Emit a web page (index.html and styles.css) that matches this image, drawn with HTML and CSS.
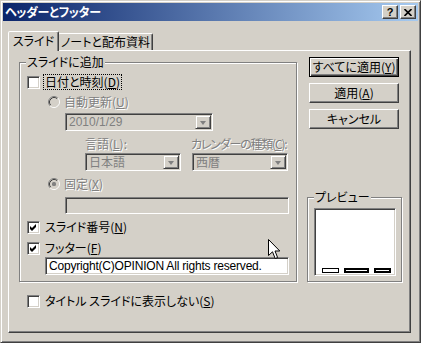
FILE: index.html
```html
<!DOCTYPE html>
<html lang="ja">
<head>
<meta charset="utf-8">
<title>ヘッダーとフッター</title>
<link rel="stylesheet" href="styles.css">
</head>
<body>
<div class="window">
  <div class="titlebar">
    <span class="title">ヘッダーとフッター</span>
    <div class="caption-buttons">
      <span class="cap-btn help">?</span>
      <span class="cap-btn close"><svg width="8" height="7" viewBox="0 0 8 7"><path d="M0.5 0 L7.5 7 M7.5 0 L0.5 7" stroke="#000" stroke-width="1.6" fill="none"/></svg></span>
    </div>
  </div>
  <div class="client">
    <div class="tabs">
      <div class="tab active">スライド</div>
      <div class="tab">ノートと配布資料</div>
    </div>
    <div class="panel">
      <div class="panel-top">
        <div class="group main-group">
          <span class="group-title">スライドに追加</span>
          <div class="row row-date">
            <span class="cb"></span>
            <span class="focus">日付と時刻(<u>D</u>)</span>
          </div>
          <div class="row row-auto">
            <svg class="radio" width="12" height="12" viewBox="0 0 12 12"><circle cx="6" cy="6" r="5" fill="#D4D0C8"/><path d="M2.11 9.89 A5.5 5.5 0 0 1 9.89 2.11" stroke="#808080" fill="none"/><path d="M9.89 2.11 A5.5 5.5 0 0 1 2.11 9.89" stroke="#fff" fill="none"/><path d="M2.82 9.18 A4.5 4.5 0 0 1 9.18 2.82" stroke="#404040" fill="none"/><path d="M9.18 2.82 A4.5 4.5 0 0 1 2.82 9.18" stroke="#D4D0C8" fill="none"/></svg>
            <span class="disabled">自動更新(<u>U</u>)</span>
          </div>
          <div class="combo combo-date">
            <span class="combo-text">2010/1/29</span>
            <span class="drop"><span class="arrow"></span></span>
          </div>
          <div class="row row-labels">
            <span class="disabled lbl-lang">言語(<u>L</u>):</span>
            <span class="disabled lbl-cal">カレンダーの種類(<u>C</u>):</span>
          </div>
          <div class="row row-combos">
            <div class="combo combo-small">
              <span class="combo-text">日本語</span>
              <span class="drop"><span class="arrow"></span></span>
            </div>
            <div class="combo combo-small">
              <span class="combo-text">西暦</span>
              <span class="drop"><span class="arrow"></span></span>
            </div>
          </div>
          <div class="row row-fixed">
            <svg class="radio" width="12" height="12" viewBox="0 0 12 12"><circle cx="6" cy="6" r="5" fill="#D4D0C8"/><path d="M2.11 9.89 A5.5 5.5 0 0 1 9.89 2.11" stroke="#808080" fill="none"/><path d="M9.89 2.11 A5.5 5.5 0 0 1 2.11 9.89" stroke="#fff" fill="none"/><path d="M2.82 9.18 A4.5 4.5 0 0 1 9.18 2.82" stroke="#404040" fill="none"/><path d="M9.18 2.82 A4.5 4.5 0 0 1 2.82 9.18" stroke="#D4D0C8" fill="none"/><rect x="4" y="4" width="4" height="4" rx="1.5" fill="#808080"/></svg>
            <span class="disabled">固定(<u>X</u>)</span>
          </div>
          <div class="field field-fixed"></div>
          <div class="row row-num">
            <span class="cb checked"><svg width="7" height="7" viewBox="0 0 7 7"><path d="M0 2 L2 4 L6 0 L6 3 L2 7 L0 5 Z" fill="#000"/></svg></span>
            <span>スライド番号(<u>N</u>)</span>
          </div>
          <div class="row row-footer">
            <span class="cb checked"><svg width="7" height="7" viewBox="0 0 7 7"><path d="M0 2 L2 4 L6 0 L6 3 L2 7 L0 5 Z" fill="#000"/></svg></span>
            <span>フッター(<u>F</u>)</span>
          </div>
          <div class="field field-copy">Copyright(C)OPINION All rights reserved.</div>
        </div>
        <div class="side">
          <div class="btn default">すべてに適用(<u>Y</u>)</div>
          <div class="btn">適用(<u>A</u>)</div>
          <div class="btn">キャンセル</div>
          <div class="group preview-group">
            <span class="group-title">プレビュー</span>
            <div class="preview">
              <span class="bar bar-white"></span>
              <span class="bar bar-black wide"></span>
              <span class="bar bar-black"></span>
            </div>
          </div>
        </div>
      </div>
      <div class="row row-bottom">
        <span class="cb"></span>
        <span>タイトル スライドに表示しない(<u>S</u>)</span>
      </div>
    </div>
  </div>
  <svg class="cursor" width="13" height="21" viewBox="0 0 13 21"><path d="M0.5 0.5 L0.5 16.5 L4.5 12.8 L7.2 19.5 L9.6 18.5 L7 12 L11.8 12 Z" fill="#fff" stroke="#000" stroke-linejoin="miter"/></svg>
</div>
</body>
</html>
```

FILE: styles.css
```css
body {
  margin: 0;
  background: #D4D0C8;
  font-family: "Noto Sans CJK JP", "Liberation Sans", sans-serif;
  font-size: 12px;
  line-height: 14px;
  font-feature-settings: "palt";
  color: #000;
}

u { text-decoration: underline; text-underline-offset: 1px; }

.window {
  position: relative;
  width: 421px;
  height: 343px;
  box-sizing: border-box;
  border: 1px solid;
  border-color: #D4D0C8 #404040 #404040 #D4D0C8;
  box-shadow: inset 1px 1px 0 #fff, inset -1px -1px 0 #808080;
  padding: 2px;
  display: flex;
  flex-direction: column;
}

.titlebar {
  height: 18px;
  flex: none;
  background: linear-gradient(to right, #0A246A, #A6CAF0);
  display: flex;
  align-items: center;
  justify-content: space-between;
  padding: 0 2px 0 2px;
  color: #fff;
  font-weight: bold;
}

.title { letter-spacing: -0.3px; }

.caption-buttons { display: flex; gap: 2px; }

.cap-btn {
  width: 16px;
  height: 14px;
  box-sizing: border-box;
  background: #D4D0C8;
  border: 1px solid;
  border-color: #fff #404040 #404040 #fff;
  box-shadow: inset -1px -1px 0 #808080;
  display: flex;
  align-items: center;
  justify-content: center;
  color: #000;
  font-family: "Liberation Sans", sans-serif;
  font-weight: bold;
  font-size: 11px;
  line-height: 12px;
}

.client {
  flex: 1;
  display: flex;
  flex-direction: column;
  padding: 10px 7px 7px 5px;
}

.tabs {
  display: flex;
  align-items: flex-end;
  height: 19px;
  flex: none;
}

.tab {
  box-sizing: border-box;
  height: 17px;
  width: 95px;
  margin-left: -1px;
  padding-top: 1px;
  text-align: center;
  border: 1px solid;
  border-bottom: none;
  border-color: #fff #404040 transparent #fff;
  border-radius: 2px 2px 0 0;
  box-shadow: inset -1px 0 0 #808080;
  background: #D4D0C8;
}

.tab.active {
  position: relative;
  z-index: 2;
  margin-left: 0;
  width: 51px;
  height: 20px;
  margin-bottom: -1px;
  padding-top: 2px;
}

.panel {
  flex: 1;
  box-sizing: border-box;
  border: 1px solid;
  border-color: #fff #404040 #404040 #fff;
  box-shadow: inset -1px -1px 0 #808080;
  padding: 6px 0 0 10px;
}

.panel-top { display: flex; align-items: flex-start; }

.group {
  position: relative;
  box-sizing: border-box;
  border: 1px solid #808080;
  box-shadow: 1px 1px 0 #fff, inset 1px 1px 0 #fff;
}

.group-title {
  position: absolute;
  top: -8px;
  left: 6px;
  padding: 0 1px;
  background: #D4D0C8;
  white-space: nowrap;
}

.main-group {
  margin-top: 5px;
  width: 278px;
  height: 220px;
  padding-top: 12px;
}

.row {
  display: flex;
  align-items: center;
  height: 14px;
  white-space: nowrap;
}

.cb {
  flex: none;
  width: 13px;
  height: 13px;
  box-sizing: border-box;
  border: 1px solid;
  border-color: #808080 #fff #fff #808080;
  box-shadow: inset 1px 1px 0 #404040, inset -1px -1px 0 #D4D0C8;
  background: #fff;
  display: flex;
  align-items: center;
  justify-content: center;
}

.row-date { margin-left: 7px; }
.row-date .cb { margin-right: 4px; }
.focus { outline: 1px dotted #000; outline-offset: 0; padding: 0 1px; }

.radio { flex: none; margin-right: 4px; }
.row-auto { margin-top: 6px; margin-left: 28px; }

.disabled { color: #808080; text-shadow: 1px 1px 0 #fff; }
.disabled u { text-decoration-color: #808080; }

.combo {
  display: flex;
  box-sizing: border-box;
  height: 18px;
  border: 1px solid;
  border-color: #808080 #fff #fff #808080;
  box-shadow: inset 1px 1px 0 #404040, inset -1px -1px 0 #D4D0C8;
  background: #D4D0C8;
  padding: 1px;
}

.combo-text {
  flex: 1;
  color: #808080;
  padding-left: 2px;
  line-height: 14px;
}

.combo-date .combo-text { font-family: "Liberation Sans", sans-serif; font-size: 12px; }

.drop {
  flex: none;
  width: 16px;
  box-sizing: border-box;
  border: 1px solid;
  border-color: #D4D0C8 #404040 #404040 #D4D0C8;
  box-shadow: inset 1px 1px 0 #fff, inset -1px -1px 0 #808080;
  display: flex;
  align-items: center;
  justify-content: center;
}

.arrow {
  width: 0;
  height: 0;
  border-left: 3.5px solid transparent;
  border-right: 3.5px solid transparent;
  border-top: 4px solid #808080;
  margin-top: 1px;
}

.combo-date { margin-top: 4px; margin-left: 45px; width: 148px; }

.row-labels { margin-top: 6px; margin-left: 65px; }
.lbl-lang { width: 106px; }
.lbl-cal { letter-spacing: -1.2px; }

.row-combos { margin-top: 2px; margin-left: 65px; height: 18px; gap: 11px; }
.combo-small { width: 96px; }

.row-fixed { margin-top: 6px; margin-left: 28px; }

.field {
  box-sizing: border-box;
  border: 1px solid;
  border-color: #808080 #fff #fff #808080;
  box-shadow: inset 1px 1px 0 #404040, inset -1px -1px 0 #D4D0C8;
}

.field-fixed {
  margin-top: 6px;
  margin-left: 45px;
  width: 224px;
  height: 17px;
  background: #D4D0C8;
}

.row-num { margin-top: 6px; margin-left: 7px; }
.row-footer { margin-top: 7px; margin-left: 7px; }
.row-num .cb, .row-footer .cb { margin-right: 5px; }

.field-copy {
  margin-top: 2px;
  margin-left: 25px;
  width: 244px;
  height: 18px;
  background: #fff;
  padding: 2px 0 0 3px;
  font-family: "Liberation Sans", sans-serif;
  font-size: 12px;
  letter-spacing: -0.2px;
  line-height: 13px;
  white-space: nowrap;
  overflow: hidden;
}

.side {
  margin-left: 10px;
  width: 95px;
  display: flex;
  flex-direction: column;
}

.btn {
  box-sizing: border-box;
  margin-left: 2px;
  width: 90px;
  height: 20px;
  border: 1px solid;
  border-color: #fff #404040 #404040 #fff;
  box-shadow: inset -1px -1px 0 #808080;
  display: flex;
  align-items: center;
  justify-content: center;
  margin-bottom: 6px;
  white-space: nowrap;
}

.btn.default {
  border-color: #000;
  box-shadow: inset 1px 1px 0 #fff, inset -1px -1px 0 #404040, inset -2px -2px 0 #808080;
}

.preview-group {
  margin-top: 62px;
  width: 95px;
  height: 85px;
  padding: 10px 0 0 6px;
}

.preview {
  box-sizing: border-box;
  width: 82px;
  height: 68px;
  border: 1px solid;
  border-color: #808080 #fff #fff #808080;
  box-shadow: inset 1px 1px 0 #404040, inset -1px -1px 0 #D4D0C8;
  background: #fff;
  display: flex;
  align-items: flex-end;
  padding: 0 0 2px 7px;
  gap: 5px;
}

.bar {
  box-sizing: border-box;
  height: 5px;
  width: 17px;
  border: 1px solid #000;
  background: #fff;
}

.bar-black {
  border-width: 2px 2px 2px 2px;
}

.bar-black.wide { width: 25px; }

.row-bottom {
  margin-top: 12px;
  margin-left: 8px;
}
.row-bottom .cb { margin-right: 5px; }

.cursor {
  position: absolute;
  left: 267px;
  top: 238px;
}
```
